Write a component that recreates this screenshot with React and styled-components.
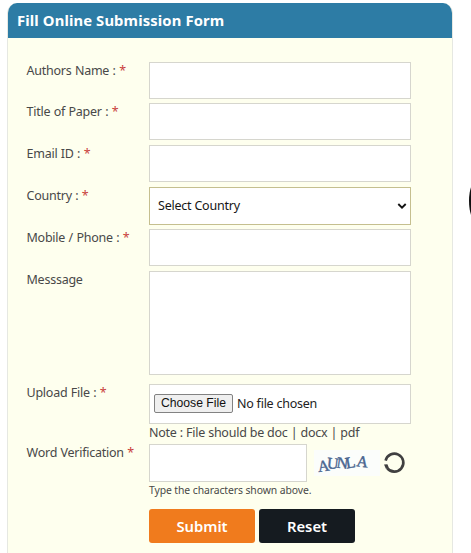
import React from "react";
import styled, { createGlobalStyle } from "styled-components";

// STYLING
const GlobalStyle = createGlobalStyle`
  * {
    box-sizing: border-box;
  }

  body {
    margin: 0;
    background-color: #fff;
    font-family: "Noto Sans", "Open Sans", sans-serif;
    font-size: 12.5px;
    letter-spacing: -0.24px;
    color: #484848;
    overflow: hidden;
  }
`;

const Page = styled.main`
  position: relative;
  width: 471px;
  height: 553px;
  padding: 3px 0 0 7px;
  overflow: hidden;
`;

const Card = styled.section`
  width: 446px;
  height: 560px;
  border: 1px solid #e6e8e2;
  border-top: 0;
  border-radius: 10px 10px 0 0;
  background-color: #feffee;
  overflow: hidden;
`;

const CardHeader = styled.h1`
  height: 35px;
  margin: 0;
  padding-left: 9px;
  background-color: #2d7ca5;
  color: #fff;
  font-size: 14.8px;
  font-weight: 700;
  letter-spacing: 0.12px;
  line-height: 34px;
  white-space: nowrap;
`;

const Form = styled.form`
  display: flex;
  flex-direction: column;
  padding: 24px 0 0 18.5px;
`;

const Row = styled.div`
  display: grid;
  grid-template-columns: 122.5px 262px;
  align-items: start;
  height: ${({ $height }) => $height || 42}px;
`;

const Label = styled.label`
  line-height: 17px;
  word-spacing: 0.4px;
  white-space: nowrap;

  span {
    color: #c9403c;
  }
`;

const Input = styled.input`
  display: block;
  width: ${({ $width }) => $width || 262}px;
  height: ${({ $height }) => $height || 37}px;
  margin: 0;
  padding: 0 8px;
  border: 1px solid #d6d6ce;
  border-radius: 0;
  background-color: #fff;
  font: inherit;
  outline: none;
`;

const TextArea = styled.textarea`
  display: block;
  width: 262px;
  height: 104px;
  margin: 0;
  border: 1px solid #d6d6ce;
  background-color: #fff;
  font: inherit;
  resize: none;
  outline: none;
`;

const SelectBox = styled.div`
  display: flex;
  align-items: center;
  justify-content: space-between;
  width: 262px;
  height: 38px;
  padding: 0 3px 1px 8px;
  border: 1px solid #c5bf8f;
  background-color: #fff;
  color: #161616;
  letter-spacing: -0.22px;
`;

const FileBox = styled.div`
  display: flex;
  align-items: center;
  gap: 4px;
  width: 262px;
  height: 40px;
  padding: 0 0 1px 4px;
  border: 1px solid #d6d6ce;
  background-color: #fff;
  color: #222;
`;

const FileButton = styled.button`
  width: 79px;
  height: 19px;
  padding: 0;
  border: 1px solid #828282;
  border-radius: 2px;
  background-color: #efefef;
  color: #111;
  font-family: "Liberation Sans", Arial, sans-serif;
  font-size: 12.2px;
  line-height: 17px;
  white-space: nowrap;
`;

const Note = styled.div`
  line-height: 17px;
  word-spacing: 0.1px;
  white-space: nowrap;
`;

const Verification = styled.div`
  display: flex;
  align-items: center;
`;

const Captcha = styled.svg`
  display: block;
  margin-left: 7px;
  letter-spacing: 0;
`;

const RefreshIcon = styled.svg`
  display: block;
  margin-left: 3px;
`;

const Hint = styled.div`
  font-size: 10.4px;
  letter-spacing: -0.09px;
  line-height: 17px;
  white-space: nowrap;
`;

const Actions = styled.div`
  display: flex;
  gap: 4px;
  padding: 10px 0 0 122.5px;
`;

const ActionButton = styled.button`
  width: ${({ $width }) => $width}px;
  height: 34px;
  padding: 0;
  border: 0;
  border-radius: 3px;
  background-color: ${({ $color }) => $color};
  color: #fff;
  font-family: inherit;
  font-size: 14.8px;
  font-weight: 600;
  line-height: 34px;
`;

const EdgeCurve = styled.svg`
  position: absolute;
  right: 0;
  top: 180px;
`;

const Field = ({ label, required, height, children }) => (
  <Row $height={height}>
    <Label>
      {label} {required && <span>*</span>}
    </Label>
    <div>{children}</div>
  </Row>
);

const captchaLetters = [
  { char: "A", x: 4.5, y: 22, size: 16, angle: -8 },
  { char: "U", x: 12.5, y: 18, size: 16, angle: 6 },
  { char: "N", x: 22, y: 17.5, size: 16, angle: 8 },
  { char: "L", x: 32.5, y: 18.5, size: 16, angle: -10 },
  { char: "A", x: 42, y: 16, size: 16, angle: 8 },
];

const App = () => (
  <>
    <GlobalStyle />
    <Page>
      <Card>
        <CardHeader>Fill Online Submission Form</CardHeader>
        <Form onSubmit={(e) => e.preventDefault()}>
          <Field label="Authors Name :" required height={41}>
            <Input />
          </Field>
          <Field label="Title of Paper :" required>
            <Input />
          </Field>
          <Field label="Email ID :" required>
            <Input />
          </Field>
          <Field label="Country :" required>
            <SelectBox>
              Select Country
              <svg width="10" height="8" viewBox="0 0 10 8">
                <path
                  d="M1.3 2 L5 5.6 L8.7 2"
                  fill="none"
                  stroke="#111"
                  strokeWidth="1.9"
                />
              </svg>
            </SelectBox>
          </Field>
          <Field label="Mobile / Phone :" required>
            <Input />
          </Field>
          <Field label="Messsage" height={113}>
            <TextArea />
          </Field>
          <Field label="Upload File :" required height={60}>
            <FileBox>
              <FileButton type="button">Choose File</FileButton>
              No file chosen
            </FileBox>
            <Note>Note : File should be doc | docx | pdf</Note>
          </Field>
          <Field label="Word Verification" required height={55}>
            <Verification>
              <Input $width={158} $height={38} />
              <Captcha width="66" height="26" viewBox="0 0 66 26">
                <rect width="66" height="26" fill="#fbfdfb" />
                {captchaLetters.map(({ char, x, y, size, angle }, i) => (
                  <text
                    key={i}
                    x={x}
                    y={y}
                    transform={`rotate(${angle} ${x} ${y})`}
                    fontFamily="Liberation Serif, serif"
                    fontSize={size}
                    fill="#4a6690"
                    stroke="#4a6690"
                    strokeWidth="0.4"
                  >
                    {char}
                  </text>
                ))}
              </Captcha>
              <RefreshIcon width="24" height="24" viewBox="0 0 24 24">
                <path
                  d="M2.6 9.6 A9 9 0 1 1 4.2 17.1"
                  fill="none"
                  stroke="#404040"
                  strokeWidth="2.6"
                />
                <path d="M1 13.6 L4.4 13.2 L5.8 16.4 L3 18 Z" fill="#404040" />
              </RefreshIcon>
            </Verification>
            <Hint>Type the characters shown above.</Hint>
          </Field>
          <Actions>
            <ActionButton $width={106} $color="#f07b1d">
              Submit
            </ActionButton>
            <ActionButton $width={96} $color="#151b20" type="reset">
              Reset
            </ActionButton>
          </Actions>
        </Form>
      </Card>
      <EdgeCurve width="4" height="42" viewBox="0 0 4 42">
        <ellipse cx="11" cy="21" rx="9" ry="22" fill="#111" />
      </EdgeCurve>
    </Page>
  </>
);

export default App;
